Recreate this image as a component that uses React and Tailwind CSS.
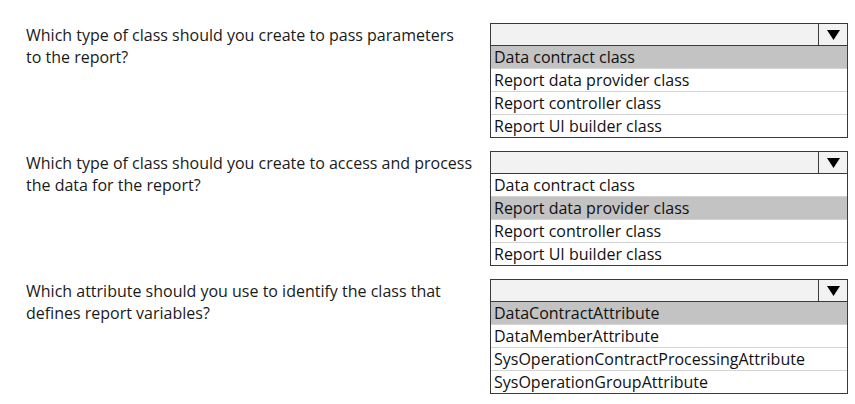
const sections = [
  {
    question: ["Which type of class should you create to pass parameters", "to the report?"],
    options: ["Data contract class", "Report data provider class", "Report controller class", "Report UI builder class"],
    selected: 0,
  },
  {
    question: ["Which type of class should you create to access and process", "the data for the report?"],
    options: ["Data contract class", "Report data provider class", "Report controller class", "Report UI builder class"],
    selected: 1,
  },
  {
    question: ["Which attribute should you use to identify the class that", "defines report variables?"],
    options: ["DataContractAttribute", "DataMemberAttribute", "SysOperationContractProcessingAttribute", "SysOperationGroupAttribute"],
    selected: 0,
  },
];

function Dropdown({ options, selected }) {
  return (
    <div className="w-[358px] border border-[#3a3a3a] bg-white">
      <div className="flex h-[22px] border-b border-[#3a3a3a] bg-[#f2f2f2]">
        <div className="flex-1" />
        <div className="w-[29px] border-l border-[#3a3a3a] flex items-center justify-center">
          <svg width="13" height="10" viewBox="0 0 13 10">
            <path d="M0 0 H13 L6.5 10 Z" fill="#000" />
          </svg>
        </div>
      </div>
      {options.map((opt, i) => (
        <div
          key={opt}
          className={`px-[3px] flex items-center text-[16px] text-[#111] ${
            i < options.length - 1 ? "h-[23px] border-b border-[#d4d4d4]" : "h-[22px]"
          } ${i === selected ? "bg-[#c3c3c3]" : ""}`}
        >
          {opt}
        </div>
      ))}
    </div>
  );
}

export default function App() {
  return (
    <div
      className="w-[855px] h-[404px] bg-white pt-[23px] flex flex-col gap-[13px]"
      style={{ fontFamily: '"Open Sans", sans-serif' }}
    >
      {sections.map((s, idx) => (
        <div key={idx} className="flex">
          <div className="w-[490px] pl-[26px] pt-[1px] text-[16px] leading-[22px] text-[#1a1a1a]">
            {s.question.map((l) => (
              <div key={l}>{l}</div>
            ))}
          </div>
          <Dropdown options={s.options} selected={s.selected} />
        </div>
      ))}
    </div>
  );
}
